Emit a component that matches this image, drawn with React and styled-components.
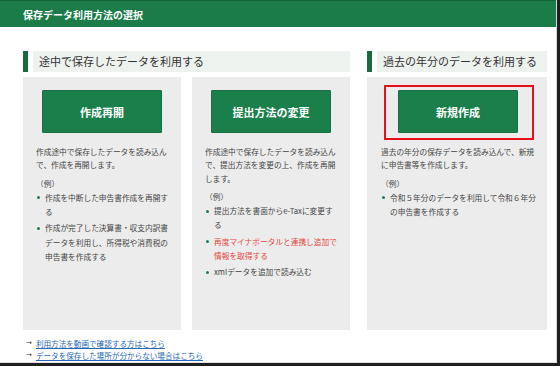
import React from "react";
import styled, { createGlobalStyle } from "styled-components";

const GlobalStyle = createGlobalStyle`
  * { box-sizing: border-box; }
  body {
    margin: 0;
    background: #ffffff;
    font-family: "Noto Sans CJK JP", "Noto Sans", sans-serif;
    color: #444;
  }
`;

const cards = [
  {
    button: "作成再開",
    desc: ["作成途中で保存したデータを読み込ん", "で、作成を再開します。"],
    items: [
      { lines: ["作成を中断した申告書作成を再開す", "る"] },
      {
        lines: [
          "作成が完了した決算書・収支内訳書",
          "データを利用し、所得税や消費税の",
          "申告書を作成する",
        ],
      },
    ],
  },
  {
    button: "提出方法の変更",
    desc: [
      "作成途中で保存したデータを読み込ん",
      "で、提出方法を変更の上、作成を再開",
      "します。",
    ],
    items: [
      { lines: ["提出方法を書面からe-Taxに変更す", "る"] },
      { lines: ["再度マイナポータルと連携し追加で", "情報を取得する"], red: true },
      { lines: ["xmlデータを追加で読み込む"] },
    ],
  },
];

const pastCard = {
  button: "新規作成",
  desc: ["過去の年分の保存データを読み込んで、新規", "に申告書等を作成します。"],
  items: [{ lines: ["令和５年分のデータを利用して令和６年分", "の申告書を作成する"] }],
};

const Lines = ({ lines }) =>
  lines.map((l, i) => (
    <React.Fragment key={i}>
      {i > 0 && <br />}
      {l}
    </React.Fragment>
  ));

const OptionCard = ({ data, wide, highlight }) => (
  <Card $wide={wide}>
    <ButtonWrap $highlight={highlight}>
      <GreenButton>{data.button}</GreenButton>
    </ButtonWrap>
    <Desc>
      <Lines lines={data.desc} />
    </Desc>
    <Example>（例）</Example>
    <List>
      {data.items.map((item, i) => (
        <Item key={i} $red={item.red}>
          <Lines lines={item.lines} />
        </Item>
      ))}
    </List>
  </Card>
);

const App = () => {
  return (
    <>
      <GlobalStyle />
      <Frame>
        <Inner>
          <Header>保存データ利用方法の選択</Header>
          <Body>
            <Columns>
              <Section $width={327}>
                <Heading>
                  <Bar />
                  <HeadingLabel>途中で保存したデータを利用する</HeadingLabel>
                </Heading>
                <CardRow>
                  {cards.map((c) => (
                    <OptionCard key={c.button} data={c} />
                  ))}
                </CardRow>
              </Section>
              <Section $width={180}>
                <Heading>
                  <Bar />
                  <HeadingLabel>過去の年分のデータを利用する</HeadingLabel>
                </Heading>
                <CardRow>
                  <OptionCard data={pastCard} wide highlight />
                </CardRow>
              </Section>
            </Columns>
            <Links>
              <LinkRow>
                <Arrow>→</Arrow>
                <TextLink href="#">利用方法を動画で確認する方はこちら</TextLink>
              </LinkRow>
              <LinkRow>
                <Arrow>→</Arrow>
                <TextLink href="#">データを保存した場所が分からない場合はこちら</TextLink>
              </LinkRow>
            </Links>
          </Body>
        </Inner>
      </Frame>
    </>
  );
};

export default App;

const Frame = styled.div`
  width: 560px;
  height: 366px;
  border-right: 3px solid #1f1f1f;
  border-bottom: 3px solid #1f1f1f;
  background: #fff;
  overflow: hidden;
`;

const Inner = styled.div`
  height: 100%;
  border-right: 1px solid #d9d9d9;
  border-bottom: 1px solid #e4e4e4;
`;

const Header = styled.div`
  height: 27px;
  background: #1b7b49;
  border-top: 1px solid #15643b;
  color: #fff;
  font-size: 10px;
  font-weight: 700;
  display: flex;
  align-items: center;
  padding-left: 23px;
`;

const Body = styled.div`
  padding: 24px 0 0 23px;
`;

const Columns = styled.div`
  display: flex;
  gap: 17px;
`;

const Section = styled.div`
  width: ${(p) => p.$width}px;
  display: flex;
  flex-direction: column;
`;

const Heading = styled.div`
  display: flex;
  gap: 5px;
  height: 21px;
`;

const Bar = styled.div`
  width: 5px;
  background: #1a6a40;
`;

const HeadingLabel = styled.div`
  flex: 1;
  background: #eef2ef;
  padding-left: 6px;
  font-size: 11px;
  line-height: 21px;
  color: #333;
  white-space: nowrap;
`;

const CardRow = styled.div`
  display: flex;
  gap: 11px;
  margin-top: 5px;
`;

const Card = styled.div`
  width: ${(p) => (p.$wide ? "180px" : "158px")};
  height: 253px;
  background: #ececec;
  padding: 13px ${(p) => (p.$wide ? "12px" : "13px")} 0 ${(p) => (p.$wide ? "14px" : "13px")};
  display: flex;
  flex-direction: column;
`;

const ButtonWrap = styled.div`
  position: relative;
  align-self: center;

  ${(p) =>
    p.$highlight &&
    `
    &::after {
      content: "";
      position: absolute;
      top: -5px;
      bottom: -7px;
      left: -14px;
      right: -16px;
      border: 2px solid #e60f1b;
      pointer-events: none;
    }
  `}
`;

const GreenButton = styled.div`
  width: 120px;
  height: 43px;
  background: #1b7f4c;
  border: 1px solid #177043;
  border-radius: 1px;
  color: #fff;
  font-size: 11px;
  font-weight: 700;
  display: flex;
  align-items: center;
  justify-content: center;
  white-space: nowrap;
`;

const Desc = styled.p`
  margin: 12px 0 0;
  font-size: 7.7px;
  line-height: 13.3px;
  white-space: nowrap;
  color: #444;
`;

const Example = styled.div`
  margin-top: 5px;
  font-size: 7.7px;
  line-height: 13.3px;
  color: #444;
`;

const List = styled.ul`
  list-style: none;
  margin: 1px 0 0;
  padding: 0;
`;

const Item = styled.li`
  position: relative;
  padding-left: ${(p) => "9px"};
  margin-bottom: 2px;
  font-size: 7.7px;
  line-height: 14.3px;
  white-space: nowrap;
  color: ${(p) => (p.$red ? "#e5483f" : "#444")};

  &::before {
    content: "";
    position: absolute;
    left: 1px;
    top: 5.5px;
    width: 3px;
    height: 3px;
    border-radius: 50%;
    background: #1b7f4c;
  }
`;

const Links = styled.div`
  margin-top: 7px;
  padding-left: 3px;
`;

const LinkRow = styled.div`
  display: flex;
  align-items: center;
  gap: 4px;
  height: 12px;
`;

const Arrow = styled.span`
  font-family: "DejaVu Sans", sans-serif;
  font-size: 7px;
  color: #333;
`;

const TextLink = styled.a`
  font-size: 7.6px;
  color: #2468b8;
  text-decoration: underline;
`;
